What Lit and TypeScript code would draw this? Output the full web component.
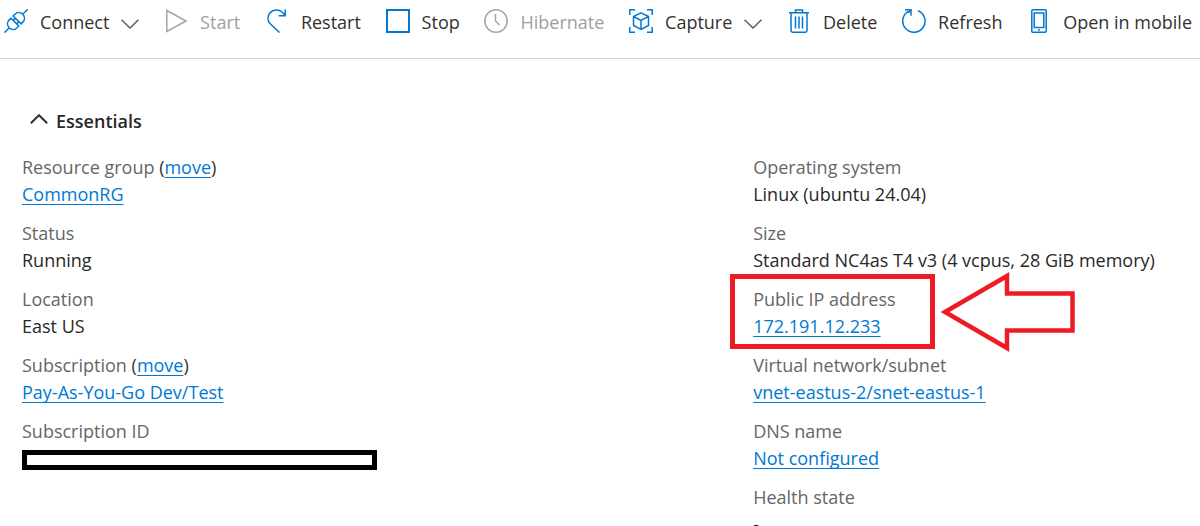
import { LitElement, html, css, svg, nothing, type TemplateResult } from "lit";
import { customElement, property, state } from "lit/decorators.js";

const icons: Record<string, TemplateResult> = {
  connect: svg`<g transform="translate(12 12) rotate(-45)"><path d="M-16.500 0H-9.500M9.500 0h7M-1.600-5.600h-2.400c-3.400 0-5.500 2.400-5.500 5.600s2.100 5.600 5.500 5.600h2.400ZM1.600-5.600h2.400c3.400 0 5.500 2.400 5.500 5.600s-2.100 5.600-5.500 5.600h-2.400ZM-1.600-2.500h3.200M-1.600 2.500h3.200"/></g>`,
  start: svg`<path d="M2.800 1.500 22 12 2.800 22.500Z"/>`,
  restart: svg`<path d="M14.500 23.500 5 14.500C2.500 12 2.300 7.500 4.500 4.500 7.500.3 13.500 0 17 3l3 3.300M20.200.5v6.300h-6.500"/>`,
  stop: svg`<path stroke-width="2" d="M1 1h22v22H1z"/>`,
  hibernate: svg`<circle cx="12" cy="12" r="11.200"/><path d="M11.500 5v7l4 4"/>`,
  capture: svg`<path d="M.8 6V.8H6M18 .8h5.200V6M23.200 18v5.200H18M6 23.200H.8V18M12 3.800l7.500 3.700v9L12 20.500l-7.500-4v-9ZM4.500 7.500 12 11.500l7.500-4M12 11.500v9"/>`,
  trash: svg`<path d="M2 3.800h20M8.500 3.500V1h7v2.500M4 4v17.500c0 1 .7 1.700 1.700 1.700h12.600c1 0 1.700-.7 1.700-1.700V4M8.500 7.500v12M12 7.500v12M15.500 7.500v12"/>`,
  refresh: svg`<path d="M16 1.700A11.200 11.200 0 1 1 6.500 2.300M3 .8h6v6M9 .8 6 4"/>`,
  mobile: svg`<rect x="4.800" y=".8" width="14.400" height="22.400" rx="1"/><path d="M7.200 4h9.600v14.500H7.200zM11 20.900h2"/>`,
};

interface Command {
  icon: string;
  label: string;
  disabled?: boolean;
  menu?: boolean;
}

interface Field {
  label: string;
  value?: string;
  link?: boolean;
  movable?: boolean;
  redacted?: boolean;
  highlighted?: boolean;
}

const commands: Command[] = [
  { icon: "connect", label: "Connect", menu: true },
  { icon: "start", label: "Start", disabled: true },
  { icon: "restart", label: "Restart" },
  { icon: "stop", label: "Stop" },
  { icon: "hibernate", label: "Hibernate", disabled: true },
  { icon: "capture", label: "Capture", menu: true },
  { icon: "trash", label: "Delete" },
  { icon: "refresh", label: "Refresh" },
  { icon: "mobile", label: "Open in mobile" },
];

const columns: Field[][] = [
  [
    { label: "Resource group", value: "CommonRG", link: true, movable: true },
    { label: "Status", value: "Running" },
    { label: "Location", value: "East US" },
    { label: "Subscription", value: "Pay-As-You-Go Dev/Test", link: true, movable: true },
    { label: "Subscription ID", redacted: true },
  ],
  [
    { label: "Operating system", value: "Linux (ubuntu 24.04)" },
    { label: "Size", value: "Standard NC4as T4 v3 (4 vcpus, 28 GiB memory)" },
    { label: "Public IP address", value: "172.191.12.233", link: true, highlighted: true },
    { label: "Virtual network/subnet", value: "vnet-eastus-2/snet-eastus-1", link: true },
    { label: "DNS name", value: "Not configured", link: true },
    { label: "Health state", value: "-" },
  ],
];

@customElement("command-button")
export class CommandButton extends LitElement {
  @property({ attribute: false }) command!: Command;

  static styles = css`
    :host {
      display: block;
    }
    .button {
      display: flex;
      align-items: center;
      gap: 12px;
      padding: 0;
      border: 0;
      background: none;
      font: inherit;
      color: #323130;
      white-space: nowrap;
      cursor: pointer;
    }
    .button:disabled {
      color: #a19f9d;
      cursor: default;
    }
    .icon {
      width: 24px;
      height: 24px;
      margin-bottom: 2px;
      flex: none;
      fill: none;
      stroke: #0078d4;
      stroke-width: 1.5;
    }
    .button:disabled .icon {
      stroke: #a5a5a5;
    }
    .chevron {
      width: 18px;
      height: 10px;
      margin-top: 4px;
      fill: none;
      stroke: #605e5c;
      stroke-width: 1.5;
    }
  `;

  render() {
    const { icon, label, disabled, menu } = this.command;
    return html`<button class="button" type="button" ?disabled=${disabled} aria-haspopup=${menu ? "menu" : nothing}>
      <svg class="icon" viewBox="0 0 24 24" aria-hidden="true">${icons[icon]}</svg>
      <span>${label}</span>
      ${menu
        ? html`<svg class="chevron" viewBox="0 0 18 10" aria-hidden="true"><path d="M.5 .8 9 9 17.500 .8" /></svg>`
        : nothing}
    </button>`;
  }
}

@customElement("essentials-field")
export class EssentialsField extends LitElement {
  @property({ attribute: false }) field!: Field;

  static styles = css`
    :host {
      display: block;
      position: relative;
      white-space: nowrap;
    }
    .label {
      color: #666;
    }
    .paren {
      color: #323130;
    }
    .value {
      min-height: 27px;
      color: #292827;
    }
    .link {
      color: #0078d4;
      text-decoration: underline;
      text-decoration-thickness: 1px;
      text-underline-offset: 3px;
      text-decoration-skip-ink: none;
    }
    .redaction {
      box-sizing: border-box;
      width: 355px;
      max-width: 100%;
      height: 20px;
      margin-top: 5px;
      border: 5px solid #000;
    }
    .frame {
      position: absolute;
      left: -23px;
      top: -12px;
      box-sizing: border-box;
      width: 205px;
      height: 75px;
      border: 5px solid #ed1c24;
      pointer-events: none;
    }
    .arrow {
      position: absolute;
      left: 188px;
      top: -15px;
      width: 136px;
      height: 82px;
      fill: #fff;
      stroke: #ed1c24;
      stroke-width: 4.5;
      pointer-events: none;
    }
  `;

  private renderValue() {
    const { value, link, redacted } = this.field;
    if (redacted) return html`<div class="redaction"></div>`;
    return html`<div class="value">${link ? html`<a class="link" href="#">${value}</a>` : value}</div>`;
  }

  render() {
    const { label, movable, highlighted } = this.field;
    return html`
      <div class="label">
        ${label}
        ${movable
          ? html`<span class="paren">(<a class="link" href="#">move</a>)</span>`
          : nothing}
      </div>
      ${this.renderValue()}
      ${highlighted
        ? html`<div class="frame"></div>
            <svg class="arrow" viewBox="0 0 136 82" aria-hidden="true">
              <path d="M4 41 66 5v17.500h65.500v37H66V77Z" />
            </svg>`
        : nothing}
    `;
  }
}

@customElement("app-root")
export class AppRoot extends LitElement {
  @state() private expanded = true;

  static styles = css`
    :host {
      display: block;
      height: 100vh;
      overflow: hidden;
      background: #fff;
      color: #323130;
      font-family: "Segoe UI", "Open Sans", "Noto Sans", sans-serif;
      font-size: 18px;
      line-height: 27px;
    }
    .toolbar {
      display: flex;
      justify-content: space-between;
      padding: 8px 8px 22px 4px;
      line-height: 28px;
      border-bottom: 1px solid #d2d0ce;
    }
    .essentials {
      padding: 49px 0 0 22px;
    }
    .heading {
      margin: 0 0 19px;
      padding-left: 8px;
      font-size: inherit;
      font-weight: 600;
    }
    .toggle {
      display: flex;
      align-items: center;
      gap: 8px;
      padding: 0;
      border: 0;
      background: none;
      font: inherit;
      color: #292827;
      cursor: pointer;
    }
    .caret {
      width: 18px;
      height: 10px;
      margin-bottom: 6px;
      fill: none;
      stroke: #323130;
      stroke-width: 2;
    }
    .columns {
      display: grid;
      grid-template-columns: 18fr 11fr;
    }
    .column {
      display: flex;
      flex-direction: column;
      gap: 12px;
      min-width: 0;
    }
  `;

  render() {
    return html`
      <div class="toolbar" role="toolbar" aria-label="Commands">
        ${commands.map((c) => html`<command-button .command=${c}></command-button>`)}
      </div>
      <section class="essentials">
        <h2 class="heading">
          <button
            class="toggle"
            type="button"
            aria-expanded=${this.expanded}
            @click=${() => (this.expanded = !this.expanded)}
          >
            <svg class="caret" viewBox="0 0 18 10" aria-hidden="true"><path d="M.8 9.300 9 1.200l8.200 8.100" /></svg>
            Essentials
          </button>
        </h2>
        ${this.expanded
          ? html`<div class="columns">
              ${columns.map(
                (fields) => html`<div class="column">
                  ${fields.map((f) => html`<essentials-field .field=${f}></essentials-field>`)}
                </div>`
              )}
            </div>`
          : nothing}
      </section>
    `;
  }
}
